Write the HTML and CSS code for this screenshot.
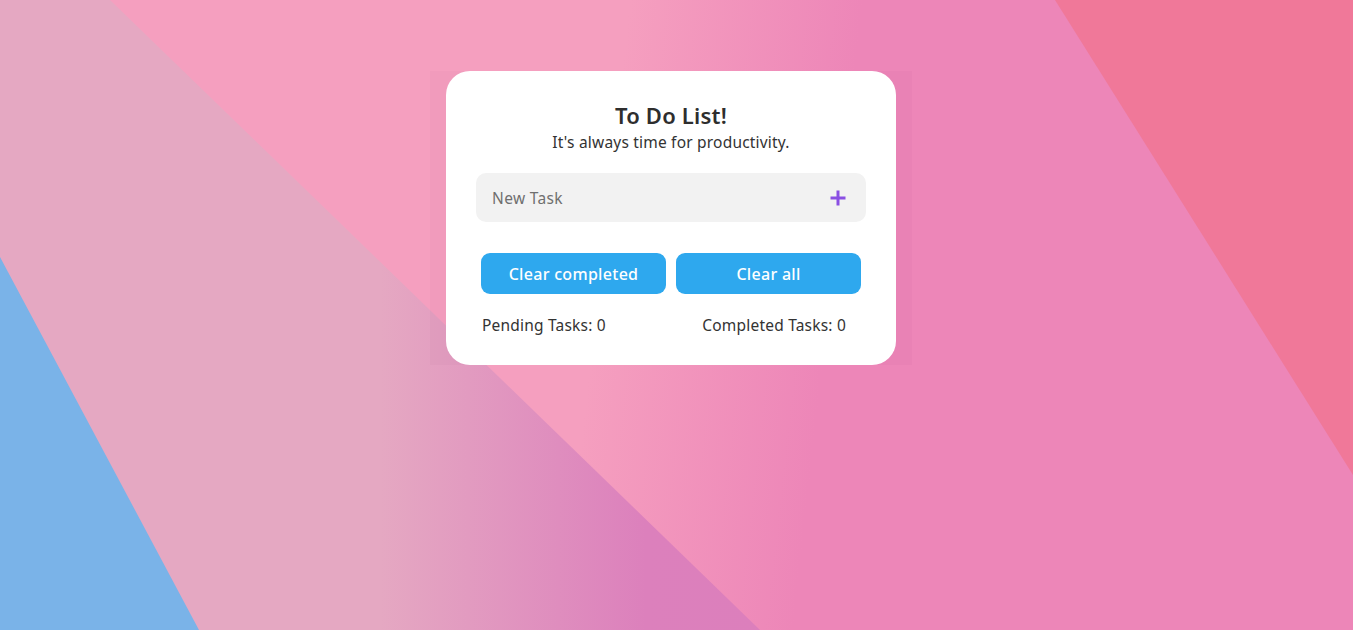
FILE: index.html
```html
<!DOCTYPE html>
<html lang="en">
<head>
<meta charset="utf-8">
<title>To Do List</title>
<link rel="stylesheet" href="styles.css">
</head>
<body>
<svg class="bg" viewBox="0 0 1353 630" preserveAspectRatio="none" aria-hidden="true">
  <defs>
    <linearGradient id="mid" x1="0" y1="0" x2="1353" y2="150" gradientUnits="userSpaceOnUse">
      <stop offset="0.46" stop-color="#f59fbf"/>
      <stop offset="0.63" stop-color="#ed86b8"/>
      <stop offset="1" stop-color="#ed86b8"/>
    </linearGradient>
    <linearGradient id="pale" x1="0" y1="0" x2="760" y2="0" gradientUnits="userSpaceOnUse">
      <stop offset="0.5" stop-color="#e5a8c2"/>
      <stop offset="0.85" stop-color="#dc80bc"/>
      <stop offset="1" stop-color="#dc7fbc"/>
    </linearGradient>
  </defs>
  <rect x="0" y="0" width="1353" height="630" fill="url(#mid)"/>
  <polygon points="1055,0 1353,0 1353,475" fill="#f07899"/>
  <polygon points="0,0 110,0 760,630 0,630" fill="url(#pale)"/>
  <polygon points="0,257 199,630 0,630" fill="#7ab3e8"/>
</svg>

<main class="page">
  <div class="backdrop">
    <section class="card">
      <header class="head">
        <h1 class="title">To Do List!</h1>
        <p class="subtitle">It's always time for productivity.</p>
      </header>
      <div class="task-input">
        <span class="placeholder">New Task</span>
        <svg class="plus" width="18" height="18" viewBox="0 0 18 18" aria-hidden="true">
          <path d="M9 1.5 V16.5 M1.5 9 H16.5" stroke="#8a4fe3" stroke-width="3" stroke-linecap="butt"/>
        </svg>
      </div>
      <div class="actions">
        <button class="btn">Clear completed</button>
        <button class="btn">Clear all</button>
      </div>
      <div class="stats">
        <span>Pending Tasks: 0</span>
        <span>Completed Tasks: 0</span>
      </div>
    </section>
  </div>
</main>
</body>
</html>
```

FILE: styles.css
```css
* { box-sizing: border-box; }
html, body { margin: 0; padding: 0; }
body {
  width: 1353px;
  height: 630px;
  overflow: hidden;
  position: relative;
  font-family: "Noto Sans", "Open Sans", sans-serif;
  color: #333;
}
.bg {
  position: absolute;
  left: 0;
  top: 0;
  width: 1353px;
  height: 630px;
  z-index: 0;
}
.page {
  position: relative;
  z-index: 1;
  display: flex;
  justify-content: center;
  padding-top: 71px;
  padding-right: 11px;
}
.backdrop {
  padding: 0 16px;
  background: rgba(120, 40, 80, 0.03);
}
.card {
  width: 450px;
  height: 294px;
  background: #fff;
  border-radius: 24px;
  padding: 30px 30px 0;
}
.head { text-align: center; }
.title {
  margin: 0;
  font-size: 22px;
  font-weight: 600;
  line-height: 28px;
  color: #2e2e2e;
  letter-spacing: 0.2px;
}
.subtitle {
  margin: 3px 0 0;
  font-size: 15.5px;
  line-height: 20px;
  letter-spacing: 0.2px;
  color: #333;
}
.task-input {
  margin-top: 21px;
  height: 49px;
  background: #f2f2f2;
  border-radius: 10px;
  display: flex;
  align-items: center;
  justify-content: space-between;
  padding: 0 19px 0 16px;
}
.placeholder {
  font-size: 15.5px;
  letter-spacing: 0.35px;
  color: #6f6f6f;
}
.plus { display: block; }
.actions {
  margin-top: 31px;
  padding: 0 5px;
  display: flex;
  gap: 10px;
}
.btn {
  flex: 1;
  height: 41px;
  border: none;
  border-radius: 9px;
  background: #2ea8ee;
  color: #fff;
  font-family: inherit;
  font-size: 16px;
  font-weight: 500;
  letter-spacing: 0.3px;
  padding: 0;
}
.stats {
  margin-top: 21px;
  padding: 0 20px 0 6px;
  display: flex;
  justify-content: space-between;
  font-size: 15.5px;
  line-height: 20px;
  letter-spacing: 0.2px;
  color: #333;
}
```
